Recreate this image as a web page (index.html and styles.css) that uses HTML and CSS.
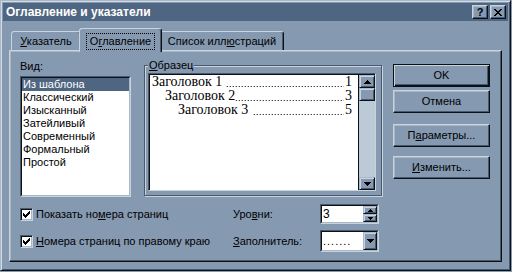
FILE: index.html
```html
<!DOCTYPE html>
<html lang="ru">
<head>
<meta charset="utf-8">
<title>Оглавление и указатели</title>
<link rel="stylesheet" href="styles.css">
</head>
<body>
<div class="window">
  <div class="titlebar">
    <span class="title">Оглавление и указатели</span>
    <div class="tbtns">
      <span class="tbtn">?</span>
      <span class="tbtn"><svg width="8" height="7" viewBox="0 0 8 7" shape-rendering="crispEdges"><path d="M0 0h2v1h-2zM6 0h2v1h-2zM1 1h2v1h-2zM5 1h2v1h-2zM2 2h4v1h-4zM3 3h2v1h-2zM2 4h4v1h-4zM1 5h2v1h-2zM5 5h2v1h-2zM0 6h2v1h-2zM6 6h2v1h-2z" fill="#000"/></svg></span>
    </div>
  </div>

  <div class="tabs">
    <div class="tab tab1"><span><u>У</u>казатель</span></div>
    <div class="tab tab2 active"><span class="focus">О<u>г</u>лавление</span></div>
    <div class="tab tab3"><span>Список илл<u>ю</u>страций</span></div>
  </div>

  <div class="panel">
    <div class="top">
      <div class="vid">
        <div class="label">Ви<u>д</u>:</div>
        <div class="listbox">
          <div class="lb-in">
            <div class="item sel">Из шаблона</div>
            <div class="item">Классический</div>
            <div class="item">Изысканный</div>
            <div class="item">Затейливый</div>
            <div class="item">Современный</div>
            <div class="item">Формальный</div>
            <div class="item">Простой</div>
          </div>
        </div>
      </div>

      <div class="group">
        <span class="legend"><u>О</u>бразец</span>
        <div class="field">
          <div class="field-in">
            <div class="preview">
              <div class="toc l1"><span class="tt">Заголовок 1</span><span class="leader gap"></span><span class="num">1</span></div>
              <div class="toc l2"><span class="tt">Заголовок 2</span><span class="leader"></span><span class="num">3</span></div>
              <div class="toc l3"><span class="tt">Заголовок 3</span><span class="leader gap"></span><span class="num">5</span></div>
            </div>
            <div class="vscroll">
              <div class="sb-btn"><svg width="7" height="4" viewBox="0 0 7 4" shape-rendering="crispEdges"><path d="M3 0h1v1h-1zM2 1h3v1h-3zM1 2h5v1h-5zM0 3h7v1h-7z" fill="#000"/></svg></div>
              <div class="sb-thumb"></div>
              <div class="sb-track"></div>
              <div class="sb-btn"><svg width="7" height="4" viewBox="0 0 7 4" shape-rendering="crispEdges"><path d="M0 0h7v1h-7zM1 1h5v1h-5zM2 2h3v1h-3zM3 3h1v1h-1z" fill="#000"/></svg></div>
            </div>
          </div>
        </div>
      </div>

      <div class="buttons">
        <div class="btn default">OK</div>
        <div class="btn b2">Отмена</div>
        <div class="btn b3">П<u>а</u>раметры...</div>
        <div class="btn b4"><u>И</u>зменить...</div>
      </div>
    </div>

    <div class="opts">
      <div class="row r1">
        <div class="chkcell">
          <span class="chk"><svg width="7" height="7" viewBox="0 0 7 7" shape-rendering="crispEdges"><path d="M6 0h1v3h-1zM5 1h1v3h-1zM4 2h1v3h-1zM0 2h1v3h-1zM1 3h1v3h-1zM2 4h1v3h-1zM3 3h1v3h-1z" fill="#000"/></svg></span>
          <span>Показать но<u>м</u>ера страниц</span>
        </div>
        <div class="olabel">Уро<u>в</u>ни:</div>
        <div class="spin">
          <div class="spin-in">
            <div class="val">3</div>
            <div class="spin-btns">
              <div class="sbtn"><svg width="5" height="3" viewBox="0 0 5 3" shape-rendering="crispEdges"><path d="M2 0h1v1h-1zM1 1h3v1h-3zM0 2h5v1h-5z" fill="#000"/></svg></div>
              <div class="sbtn"><svg width="5" height="3" viewBox="0 0 5 3" shape-rendering="crispEdges"><path d="M0 0h5v1h-5zM1 1h3v1h-3zM2 2h1v1h-1z" fill="#000"/></svg></div>
            </div>
          </div>
        </div>
      </div>
      <div class="row r2">
        <div class="chkcell">
          <span class="chk"><svg width="7" height="7" viewBox="0 0 7 7" shape-rendering="crispEdges"><path d="M6 0h1v3h-1zM5 1h1v3h-1zM4 2h1v3h-1zM0 2h1v3h-1zM1 3h1v3h-1zM2 4h1v3h-1zM3 3h1v3h-1z" fill="#000"/></svg></span>
          <span><u>Н</u>омера страниц по правому краю</span>
        </div>
        <div class="olabel"><u>З</u>аполнитель:</div>
        <div class="combo">
          <div class="combo-in">
            <div class="val dots">.......</div>
            <div class="cbtn"><svg width="7" height="4" viewBox="0 0 7 4" shape-rendering="crispEdges"><path d="M0 0h7v1h-7zM1 1h5v1h-5zM2 2h3v1h-3zM3 3h1v1h-1z" fill="#000"/></svg></div>
          </div>
        </div>
      </div>
    </div>
  </div>
</div>
</body>
</html>
```

FILE: styles.css
```css
* { box-sizing: border-box; }

body {
  margin: 0;
  background: #8599b1;
  font: 11px/13px "Liberation Sans", Arial, sans-serif;
  color: #000;
}

u { text-decoration: underline; text-underline-offset: 1px; }

.window {
  width: 511px;
  height: 271px;
  background: #8599b1;
  border: 1px solid;
  border-color: #a9b8c9 #0b1117 #0b1117 #a9b8c9;
  box-shadow: inset 1px 1px #d3dce6, inset -1px -1px #4a5a6e;
  padding: 2px;
  display: flex;
  flex-direction: column;
}

.titlebar {
  height: 18px;
  background: #4f6682;
  display: flex;
  align-items: center;
  justify-content: space-between;
  padding: 0 2px 0 3px;
}
.title {
  color: #fff;
  font-weight: bold;
  font-size: 12px;
  line-height: 14px;
}
.tbtns { display: flex; gap: 2px; }
.tbtn {
  width: 16px;
  height: 14px;
  background: #8599b1;
  border: 1px solid;
  border-color: #c8d3de #0b1117 #0b1117 #c8d3de;
  box-shadow: inset -1px -1px #4a5a6e, inset 1px 1px #a9b8c9;
  display: flex;
  align-items: center;
  justify-content: center;
  font-weight: bold;
  font-size: 11px;
  line-height: 12px;
}

/* tabs */
.tabs {
  display: flex;
  align-items: flex-end;
  height: 22px;
  margin: 7px 0 0 8px;
}
.tab {
  position: relative;
  height: 19px;
  border: 1px solid;
  border-bottom: none;
  border-color: #c8d3de #0b1117 transparent #c8d3de;
  border-radius: 3px 3px 0 0;
  box-shadow: inset -1px 0 #4a5a6e;
  display: flex;
  justify-content: center;
  padding-top: 3px;
  background: #8599b1;
}
.tab1 { width: 70px; }
.tab3 { width: 124px; }
.tab2.active {
  z-index: 1;
  width: 83px;
  height: 24px;
  margin: 0 -2px -2px;
  padding-top: 4px;
}
.focus {
  display: inline-block;
  height: 17px;
  padding: 1px 3px 0;
  border: 1px dotted #000;
}

/* panel */
.panel {
  margin: 0 6px;
  height: 212px;
  border: 1px solid;
  border-color: #c8d3de #0b1117 #0b1117 #c8d3de;
  box-shadow: inset -1px -1px #4a5a6e, inset 1px 1px #a9b8c9;
  padding: 9px 10px 0 10px;
}

.top {
  display: flex;
  align-items: flex-start;
}

.vid { width: 111px; }
.label { height: 13px; }
.listbox {
  margin-top: 3px;
  height: 121px;
  border: 1px solid;
  border-color: #4a5a6e #c8d3de #c8d3de #4a5a6e;
  background: #fff;
}
.lb-in {
  height: 100%;
  border: 1px solid;
  border-color: #0b1117 #a9b8c9 #a9b8c9 #0b1117;
}
.item {
  height: 13px;
  padding-left: 1px;
  white-space: nowrap;
}
.item.sel { background: #4f6682; color: #fff; }

/* group */
.group {
  position: relative;
  margin: 5px 0 0 13px;
  width: 238px;
  height: 131px;
  border: 1px solid #4a5a6e;
  box-shadow: inset 1px 1px #c8d3de, 1px 1px #c8d3de;
  padding: 7px 5px 3px 3px;
}
.legend {
  position: absolute;
  top: -7px;
  left: 3px;
  padding: 0 1px;
  background: #8599b1;
  line-height: 13px;
}
.field {
  width: 228px;
  height: 118px;
  border: 1px solid;
  border-color: #4a5a6e #c8d3de #c8d3de #4a5a6e;
}
.field-in {
  height: 100%;
  display: flex;
  border-top: 1px solid #0b1117;
  border-left: 1px solid #0b1117;
}
.preview {
  flex: 1;
  min-width: 0;
  background: #fff;
  border-right: 1px solid #0b1117;
  padding: 0 6px 0 2px;
  font: 14px/14px "Liberation Serif", "Times New Roman", serif;
}
.toc { display: flex; white-space: nowrap; height: 14px; }
.toc.l2 { padding-left: 13px; }
.toc.l3 { padding-left: 26px; }
.tt, .num { flex: none; }
.leader {
  flex: 1;
  min-width: 0;
  margin-right: 1px;
  background-image: linear-gradient(to right, #000 1px, transparent 1px);
  background-size: 3px 1px;
  background-repeat: repeat-x;
  background-position: right 0 top 11px;
}
.leader.gap { margin-left: 4px; }

.vscroll {
  width: 16px;
  display: flex;
  flex-direction: column;
  background: #bccad8;
}
.sb-btn, .sb-thumb {
  height: 13px;
  background: #8599b1;
  border: 1px solid;
  border-color: #a9b8c9 #0b1117 #0b1117 #a9b8c9;
  box-shadow: inset 1px 1px #c8d3de, inset -1px -1px #4a5a6e;
  display: flex;
  align-items: center;
  justify-content: center;
}
.sb-track { flex: 1; }

/* buttons */
.buttons {
  margin: 4px 0 0 11px;
  width: 97px;
  display: flex;
  flex-direction: column;
}
.btn {
  height: 23px;
  background: #8599b1;
  border: 1px solid;
  border-color: #c8d3de #0b1117 #0b1117 #c8d3de;
  box-shadow: inset -1px -1px #4a5a6e, inset 1px 1px #a9b8c9;
  display: flex;
  align-items: center;
  justify-content: center;
}
.btn.default {
  border-color: #0b1117;
  box-shadow: inset 1px 1px #c8d3de, inset -1px -1px #0b1117, inset -2px -2px #4a5a6e;
}
.b2 { margin-top: 3px; }
.b3 { margin-top: 11px; }
.b4 { margin-top: 9px; }

/* options */
.opts { margin-top: 7px; }
.row {
  display: flex;
  align-items: center;
}
.r1 { height: 20px; }
.r2 { height: 22px; margin-top: 6px; }
.chkcell {
  width: 213px;
  display: flex;
  align-items: center;
  gap: 3px;
  white-space: nowrap;
}
.chk {
  width: 13px;
  height: 13px;
  flex: none;
  background: #fff;
  border: 1px solid;
  border-color: #4a5a6e #c8d3de #c8d3de #4a5a6e;
  box-shadow: inset 1px 1px #0b1117, inset -1px -1px #a9b8c9;
  display: flex;
  align-items: center;
  justify-content: center;
}
.olabel { width: 87px; white-space: nowrap; }

.spin, .combo {
  width: 59px;
  border: 1px solid;
  border-color: #4a5a6e #c8d3de #c8d3de #4a5a6e;
}
.spin { height: 20px; }
.combo { height: 22px; }
.spin-in, .combo-in {
  height: 100%;
  display: flex;
  border: 1px solid;
  border-color: #0b1117 #a9b8c9 #a9b8c9 #0b1117;
  background: #fff;
}
.val {
  flex: 1;
  padding: 2px 0 0 1px;
  font-size: 12px;
  color: #000;
}
.combo .val { padding-top: 3px; }
.dots { letter-spacing: 1px; font-size: 11px; color: #000; }
.spin-btns {
  width: 14px;
  display: flex;
  flex-direction: column;
}
.sbtn, .cbtn {
  background: #8599b1;
  border: 1px solid;
  border-color: #a9b8c9 #0b1117 #0b1117 #a9b8c9;
  box-shadow: inset 1px 1px #c8d3de, inset -1px -1px #4a5a6e;
  display: flex;
  align-items: center;
  justify-content: center;
}
.sbtn { flex: 1; }
.cbtn { width: 14px; }
```
